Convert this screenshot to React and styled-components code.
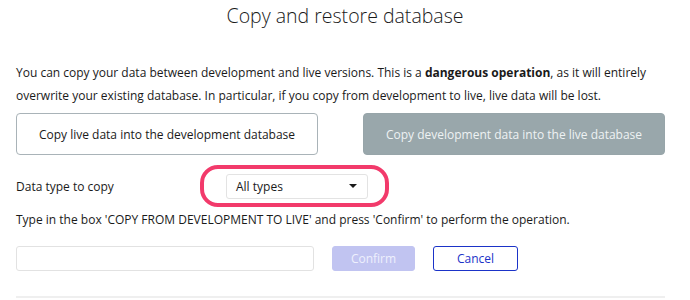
import React from "react";
import styled, { createGlobalStyle } from "styled-components";

const Global = createGlobalStyle`
  html, body { margin: 0; padding: 0; background: #fff; }
  body { font-family: "Open Sans", "Noto Sans", sans-serif; color: #1a1a1a; }
  * { box-sizing: border-box; }
`;

const Page = styled.div`
  width: 690px;
  height: 300px;
  overflow: hidden;
  padding: 0 25px 0 16px;
`;

const Title = styled.h1`
  margin: 0;
  padding-top: 2px;
  text-align: center;
  font-size: 19.5px;
  font-weight: 300;
  line-height: 28px;
  color: #1a1a1a;
  padding-left: 9px;
`;

const Intro = styled.p`
  margin: 31px 0 0;
  font-size: 12px;
  line-height: 23px;
  b { font-weight: 700; }
`;

const ButtonRow = styled.div`
  display: grid;
  grid-template-columns: 302px 302px;
  column-gap: 45px;
  margin-top: 6px;
`;

const BigButton = styled.button`
  height: 42px;
  border-radius: 4px;
  font-family: inherit;
  font-size: 12px;
  cursor: pointer;
  border: 1px solid ${(p) => (p.$disabled ? "#97a5a9" : "#a9b3b8")};
  background: ${(p) => (p.$disabled ? "#99a7ab" : "#fff")};
  color: ${(p) => (p.$disabled ? "#eef2f3" : "#1a1a1a")};
`;

const FieldRow = styled.div`
  display: flex;
  align-items: center;
  margin-top: 10px;
  height: 42px;
`;

const Label = styled.span`
  width: 184px;
  font-size: 12px;
`;

const Highlight = styled.div`
  width: 189px;
  height: 42px;
  border: 4px solid #f23a6b;
  border-radius: 18px;
  display: flex;
  align-items: center;
  padding-left: 22px;
`;

const Select = styled.div`
  width: 142px;
  height: 25px;
  border: 1px solid #e3e3e3;
  border-radius: 3px;
  display: flex;
  align-items: center;
  justify-content: space-between;
  padding: 0 10px 0 9px;
  font-size: 12px;
`;

const Caret = styled.span`
  width: 0;
  height: 0;
  border-left: 4px solid transparent;
  border-right: 4px solid transparent;
  border-top: 4px solid #1a1a1a;
`;

const Instruction = styled.p`
  margin: 3px 0 0;
  font-size: 12px;
  line-height: 20px;
`;

const ConfirmRow = styled.div`
  display: flex;
  align-items: center;
  margin-top: 16px;
`;

const TextInput = styled.input`
  width: 298px;
  height: 25px;
  border: 1px solid #e2e2e2;
  border-radius: 3px;
  outline: none;
  font-family: inherit;
  margin-right: 18px;
`;

const SmallButton = styled.button`
  height: 25px;
  border-radius: 3px;
  font-family: inherit;
  font-size: 12px;
  padding: 0;
  width: ${(p) => p.$w}px;
  margin-right: 18px;
  border: 1px solid ${(p) => (p.$primary ? "#c1c4f1" : "#1b33c8")};
  background: ${(p) => (p.$primary ? "#c1c4f1" : "#fff")};
  color: ${(p) => (p.$primary ? "#eef0fd" : "#1b33c8")};
`;

const Divider = styled.div`
  margin-top: 25px;
  width: 649px;
  height: 2px;
  background: #efefef;
`;

export default function App() {
  return (
    <>
      <Global />
      <Page>
        <Title>Copy and restore database</Title>
        <Intro>
          You can copy your data between development and live versions. This is a{" "}
          <b>dangerous operation</b>, as it will entirely overwrite your existing database. In
          particular, if you copy from development to live, live data will be lost.
        </Intro>
        <ButtonRow>
          <BigButton>Copy live data into the development database</BigButton>
          <BigButton $disabled>Copy development data into the live database</BigButton>
        </ButtonRow>
        <FieldRow>
          <Label>Data type to copy</Label>
          <Highlight>
            <Select>
              <span>All types</span>
              <Caret />
            </Select>
          </Highlight>
        </FieldRow>
        <Instruction>
          Type in the box 'COPY FROM DEVELOPMENT TO LIVE' and press 'Confirm' to perform the
          operation.
        </Instruction>
        <ConfirmRow>
          <TextInput />
          <SmallButton $primary $w={83}>Confirm</SmallButton>
          <SmallButton $w={85}>Cancel</SmallButton>
        </ConfirmRow>
        <Divider />
      </Page>
    </>
  );
}
